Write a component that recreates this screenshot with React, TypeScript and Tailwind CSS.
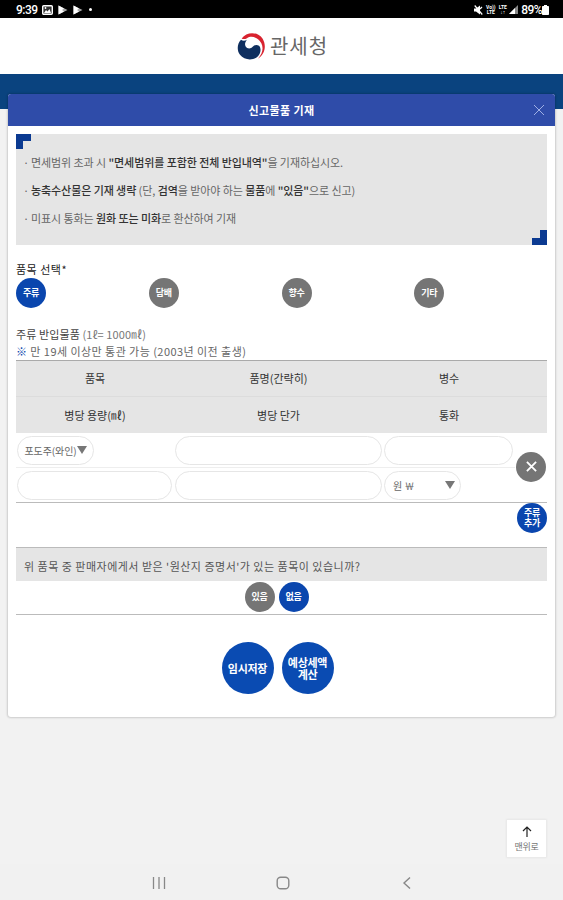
import React, { useState } from 'react';

const Icons = {
  Logo: () => (
    <svg className="w-7 h-[27px]" viewBox="0 0 84 80">
      <path fill="#0f2f5f" d="M12 20C0 32-1 52 9 65c13 17 41 18 54 4 9-10 10-24 3-31-6-5-15-3-19 3-6 7-17 6-21-1-4-7-1-14 4-20-6 4-13 4-18 0z" />
      <path fill="#d8232f" d="M14 16C29-5 62-6 77 17c12 21 7 46-14 60 14-17 17-33 10-47C63 12 43 6 30 15c-5 3-12 4-16 1z" />
    </svg>
  ),
  Close: ({ className }: { className: string }) => (
    <svg className={className} fill="none" stroke="currentColor" viewBox="0 0 12 12"><path d="M1 1l10 10M11 1L1 11" /></svg>
  ),
  Picture: () => (
    <svg className="w-[11px] h-[10px]" viewBox="0 0 11 10"><rect x=".7" y=".7" width="9.6" height="8.6" rx="1" fill="#333" stroke="#fff" strokeWidth="1.4" /><path fill="#fff" d="M2 8l2-3 1.500 1.500L7.500 4 9 8z" /><circle cx="3.500" cy="3" r=".9" fill="#fff" /></svg>
  ),
  Play: () => (
    <svg className="w-[10px] h-[10px]" viewBox="0 0 10 10"><path fill="#aaa" d="M.5.5L9.500 5l-9 4.500z" /><path fill="#fff" d="M.5.5L6 3.500 4 5l2 1.500-5.500 3z" /></svg>
  ),
  Mute: () => (
    <svg className="w-[9px] h-[10px]" viewBox="0 0 9 10"><path fill="#fff" d="M0 3.500h2L6 .5v9l-4-3H0z" /><path stroke="#fff" strokeWidth="1.200" d="M.7.5l7.600 9M8 2L6 4" /></svg>
  ),
  Signal: () => (
    <svg className="w-[9px] h-[9px]" viewBox="0 0 9 9"><path fill="#888" d="M9 0v9H0z" /><path fill="#fff" d="M6 3v6H0z" /></svg>
  ),
  Battery: () => (
    <svg className="w-[7px] h-[10px]" viewBox="0 0 7 10"><path fill="#fff" d="M2 0h3v1h1.200q.8 0 .8.8v7.400q0 .8-.8.8H.8q-.8 0-.8-.8V1.800Q0 1 .8 1H2z" /></svg>
  ),
  Up: () => (
    <svg className="w-[10px] h-[11px]" fill="none" stroke="#222" strokeWidth="1.200" viewBox="0 0 10 11"><path d="M5 11V1M1 5l4-4 4 4" /></svg>
  ),
  Caret: () => (
    <svg className="w-[10px] h-[8px] shrink-0" viewBox="0 0 10 8"><path fill="#777" d="M0 0h10L5 8z" /></svg>
  ),
};

const categories = ['주류', '담배', '향수', '기타'];

const headers = [
  ['품목', '품명(간략히)', '병수'],
  ['병당 용량(㎖)', '병당 단가', '통화'],
];

const columns = 'grid grid-cols-[158px_209px_132px_32px]';
const circle = 'w-[30px] h-[30px] rounded-full flex items-center justify-center text-white font-bold text-[9px] leading-[10px] tracking-[-0.3px] shrink-0';
const field = 'h-[29px] rounded-full border border-[#e6e6e6] bg-white outline-none';

export default function App() {
  const [category, setCategory] = useState('주류');
  const [hasOrigin, setHasOrigin] = useState(false);

  return (
    <div className="relative w-full h-[900px] flex flex-col overflow-hidden bg-[#f2f2f2] text-[#444] font-['Noto_Sans_CJK_KR','Noto_Sans',sans-serif]">
      {/* ステータスバー */}
      <div className="h-[18px] shrink-0 bg-black text-white flex items-center justify-between pl-4 pr-[14px] font-['Roboto',sans-serif]">
        <div className="flex items-center pt-px">
          <span className="text-[12px] font-medium w-[26px] tracking-[-0.5px]">9:39</span>
          <Icons.Picture />
          <span className="ml-[5px] flex gap-[5px]"><Icons.Play /><Icons.Play /></span>
          <span className="ml-[6px] w-[3px] h-[3px] bg-white rounded-full" />
        </div>
        <div className="flex items-center pt-px">
          <Icons.Mute />
          <span className="ml-[2px] w-[11px] text-[5px] leading-[5px] font-bold text-center">Vo))<br />LTE</span>
          <span className="ml-[2px] mr-[2px] w-[9px] text-[5px] leading-[5px] font-bold text-center">LTE<br />↓↑</span>
          <Icons.Signal />
          <span className="ml-[3px] text-[12px] font-medium tracking-[-0.6px]">89%</span>
          <Icons.Battery />
        </div>
      </div>

      {/* ヘッダー */}
      <header className="h-14 shrink-0 bg-white flex items-center justify-center gap-[5px] pl-[2px]">
        <Icons.Logo />
        <h1 className="text-[20px] leading-none text-[#666] tracking-[1px]">관세청</h1>
      </header>
      <div className="h-[35px] shrink-0 bg-[#0a437f]" />

      {/* 申告物品モーダル */}
      <main className="relative mx-2 -mt-[15px] h-[623px] shrink-0 bg-white rounded-[3px] shadow-[0_0_2px_1px_rgba(0,0,0,0.16)] overflow-hidden">
        <div className="h-8 bg-[#2f4ca9] grid grid-cols-[1fr_auto_1fr] items-center pr-[10px]">
          <h2 className="col-start-2 pl-[10px] text-[11px] font-bold text-white tracking-[0.4px]">신고물품 기재</h2>
          <button className="justify-self-end text-[#9fafe4]"><Icons.Close className="w-3 h-3" /></button>
        </div>

        <div className="px-2 pt-2">
          <div className="relative h-[111px] bg-[#e5e5e5] pl-[7px] pt-[14px] text-[11px] leading-7 tracking-[-0.08px] text-[#666] whitespace-nowrap">
            <i className="absolute top-0 left-0 w-[15px] h-[15px] border-t-[7px] border-l-[7px] border-[#0b3a91]" />
            <i className="absolute bottom-0 right-0 w-[15px] h-[15px] border-b-[7px] border-r-[7px] border-[#0b3a91]" />
            <p className="flex"><span className="w-2">·</span><span>면세범위 초과 시 <b className="font-medium text-[#333]">"면세범위를 포함한 전체 반입내역"</b>을 기재하십시오.</span></p>
            <p className="flex"><span className="w-2">·</span><span><b className="font-medium text-[#333]">농축수산물은 기재 생략</b> (단, <b className="font-medium text-[#333]">검역</b>을 받아야 하는 <b className="font-medium text-[#333]">물품</b>에 <b className="font-medium text-[#333]">"있음"</b>으로 신고)</span></p>
            <p className="flex"><span className="w-2">·</span><span>미표시 통화는 <b className="font-medium text-[#333]">원화 또는 미화</b>로 환산하여 기재</span></p>
          </div>

          {/* 品目選択 */}
          <p className="mt-4 h-[17px] text-[11px] leading-4 tracking-[0.5px] text-[#222]">품목 선택*</p>
          <div className="grid grid-cols-4">
            {categories.map((name) => (
              <button key={name} onClick={() => setCategory(name)} className={`${circle} ${category === name ? 'bg-[#0a46ae]' : 'bg-[#757575]'}`}>{name}</button>
            ))}
          </div>

          <p className="mt-[18px] text-[11px] leading-4 tracking-[0.1px]">주류 반입물품 <span className="text-[#777]">(1ℓ= 1000㎖)</span></p>
          <p className="h-[18px] text-[11px] leading-[18px] tracking-[0.45px] text-[#666]"><span className="text-[#0a46ae] font-medium">※</span> 만 19세 이상만 통관 가능 (2003년 이전 출생)</p>

          {/* 入力テーブル */}
          <div className="border-t border-[#aaa] bg-[#e5e5e5] divide-y divide-[#dcdcdc]">
            {headers.map((row, i) => (
              <div key={i} className={`${columns} h-9 items-center text-center text-[11px] text-[#333]`}>
                {row.map((label) => <span key={label}>{label}</span>)}
              </div>
            ))}
          </div>
          <div className="flex items-center h-[70px] border-b border-[#bbb]">
            <div className="w-[499px]">
              <div className="grid grid-cols-[158px_209px_132px] items-center h-[35px] border-b border-[#eee]">
                <button className={`${field} ml-px w-[77px] flex items-center justify-center text-[10px] tracking-[-0.1px] text-[#666] whitespace-nowrap`}>포도주(와인)<Icons.Caret /></button>
                <input className={`${field} ml-px w-[207px]`} />
                <input className={`${field} ml-px w-[129px]`} />
              </div>
              <div className="grid grid-cols-[158px_209px_132px] items-center h-[34px]">
                <input className={`${field} ml-px w-[155px]`} />
                <input className={`${field} ml-px w-[207px]`} />
                <button className={`${field} ml-px w-[77px] flex items-center justify-between pl-2 pr-[5px] text-[10px] text-[#666]`}>원 ￦<Icons.Caret /></button>
              </div>
            </div>
            <button className={`${circle} ml-px -mt-[2px] bg-[#757575]`}><Icons.Close className="w-[11px] h-[11px] stroke-2" /></button>
          </div>
          <div className="flex justify-end h-[44px]">
            <button className={`${circle} bg-[#0a46ae]`}>주류<br />추가</button>
          </div>

          {/* 原産地証明 */}
          <p className="h-[34px] border-t border-[#bbb] bg-[#e5e5e5] pl-2 text-[11px] leading-[36px] tracking-[0.49px] text-[#555] whitespace-nowrap">위 품목 중 판매자에게서 받은 '원산지 증명서'가 있는 품목이 있습니까?</p>
          <div className="flex justify-center gap-1 pt-px pr-[10px] h-[34px] border-b border-[#bbb]">
            <button onClick={() => setHasOrigin(true)} className={`${circle} ${hasOrigin ? 'bg-[#0a46ae]' : 'bg-[#757575]'}`}>있음</button>
            <button onClick={() => setHasOrigin(false)} className={`${circle} ${hasOrigin ? 'bg-[#757575]' : 'bg-[#0a46ae]'}`}>없음</button>
          </div>

          <div className="mt-[27px] flex justify-center gap-2 pr-[8px] text-white font-bold text-[11px] leading-[12px] tracking-[-0.3px]">
            <button className="w-[52px] h-[52px] rounded-full bg-[#0a4bb2]">임시저장</button>
            <button className="w-[52px] h-[52px] rounded-full bg-[#0a4bb2]">예상세액<br />계산</button>
          </div>
        </div>
      </main>

      {/* トップへ戻る */}
      <button className="absolute left-[507px] top-[820px] w-[39px] h-[37px] bg-white shadow-[0_0_2px_1px_rgba(0,0,0,0.05)] flex flex-col items-center justify-center gap-[5px] text-[9px] leading-[10px] tracking-[-0.3px] text-[#777]">
        <Icons.Up />
        맨위로
      </button>

      {/* ナビゲーションバー */}
      <nav className="mt-auto h-9 shrink-0 bg-[#f1f1f1] flex items-center justify-center gap-[110px] pl-[2px] pt-[2px] text-[#888]">
        <svg className="w-[14px] h-3" fill="none" stroke="currentColor" strokeWidth="1.300" viewBox="0 0 14 12"><path d="M1.500 0v12M7 0v12M12.500 0v12" /></svg>
        <svg className="w-[14px] h-[14px]" fill="none" stroke="currentColor" strokeWidth="1.400" viewBox="0 0 14 14"><rect x="1.200" y="1.200" width="11.600" height="11.600" rx="3.500" /></svg>
        <svg className="w-[14px] h-3" fill="none" stroke="currentColor" strokeWidth="1.400" viewBox="0 0 14 12"><path d="M10 .5L4 6l6 5.500" /></svg>
      </nav>
    </div>
  );
}
